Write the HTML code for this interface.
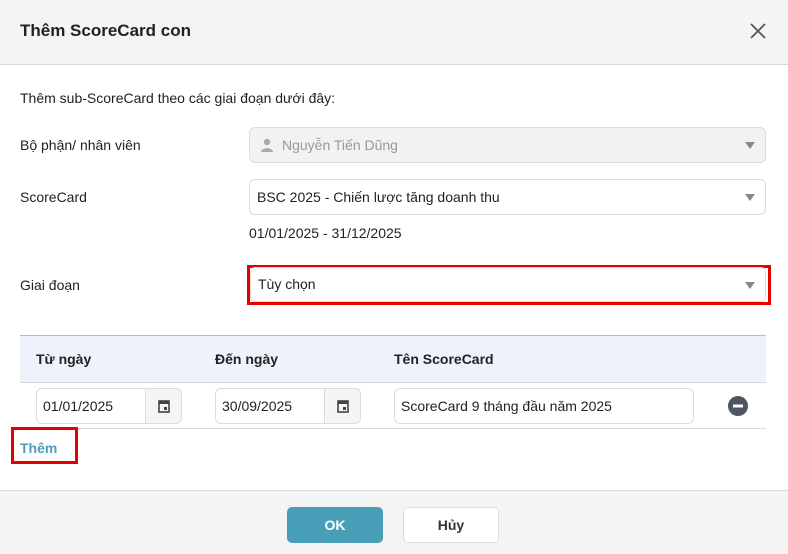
<!DOCTYPE html>
<html><head><meta charset="utf-8"><style>
*{box-sizing:border-box;margin:0;padding:0}
body{width:788px;height:554px;overflow:hidden;background:#fff;font-family:"Liberation Sans",Arial,sans-serif;font-size:14px;color:#222;position:relative}
.a{position:absolute}
.hdr{left:0;top:0;width:788px;height:65px;background:#f4f4f4;border-bottom:1px solid #d8d8d8}
.sel{border:1px solid #dcdcdc;border-radius:6px;background:#fff;height:36px;line-height:34px;padding-left:7px;font-size:14px}
.tri{position:absolute;right:10px;top:14px;width:0;height:0;border-left:5px solid transparent;border-right:5px solid transparent;border-top:7px solid #888}
.inp{border:1px solid #dcdcdc;border-radius:6px;background:#fff;height:36px;line-height:34px;padding-left:6px;font-size:14px}
.cal{position:absolute;right:0;top:0;width:36px;height:34px;border-left:1px solid #dcdcdc;background:#f5f5f5;border-radius:0 6px 6px 0}
.btn{border-radius:5px;height:36px;line-height:36px;text-align:center;font-weight:bold;font-size:14px}
</style></head><body>
<div class="a hdr"></div>
<div class="a" style="left:20px;top:21px;font-size:17px;font-weight:bold;color:#222">Thêm ScoreCard con</div>
<svg class="a" style="left:750px;top:23px" width="16" height="16" viewBox="0 0 16 16"><path d="M1 1L15 15M15 1L1 15" stroke="#555" stroke-width="1.8"/></svg>
<div class="a" style="left:20px;top:90px">Thêm sub-ScoreCard theo các giai đoạn dưới đây:</div>
<div class="a" style="left:20px;top:137px">Bộ phận/ nhân viên</div>
<div class="a sel" style="left:249px;top:127px;width:517px;background:#f2f2f2;color:#999;padding-left:32px">Nguyễn Tiến Dũng<span class="tri"></span>
<svg class="a" style="left:10px;top:10px" width="14" height="14" viewBox="0 0 14 14"><circle cx="7" cy="4" r="3.2" fill="#aaa"/><path d="M1 14C1 9 13 9 13 14Z" fill="#aaa"/></svg></div>
<div class="a" style="left:20px;top:189px">ScoreCard</div>
<div class="a sel" style="left:249px;top:179px;width:517px">BSC 2025 - Chiến lược tăng doanh thu<span class="tri"></span></div>
<div class="a" style="left:249px;top:225px">01/01/2025 - 31/12/2025</div>
<div class="a" style="left:20px;top:277px">Giai đoạn</div>
<div class="a" style="left:247px;top:265px;width:524px;height:40px;border:3px solid #e60000"></div>
<div class="a sel" style="left:250px;top:267px;width:516px;height:35px;line-height:33px;border-radius:5px">Tùy chọn<span class="tri"></span></div>
<div class="a" style="left:20px;top:335px;width:746px;height:48px;background:#eef3fb;border-top:1px solid #bbb;border-bottom:1px solid #d8d8d8"></div>
<div class="a" style="left:36px;top:351px;font-weight:bold">Từ ngày</div>
<div class="a" style="left:215px;top:351px;font-weight:bold">Đến ngày</div>
<div class="a" style="left:394px;top:351px;font-weight:bold">Tên ScoreCard</div>
<div class="a" style="left:20px;top:428px;width:746px;height:1px;background:#d8d8d8"></div>
<div class="a inp" style="left:36px;top:388px;width:146px">01/01/2025<div class="cal"><svg class="a" style="left:12px;top:10px" width="12" height="14" viewBox="0 0 12 14"><rect x="1" y="2" width="10" height="11" fill="none" stroke="#444" stroke-width="1.6"/><rect x="1" y="2" width="10" height="3" fill="#444"/><rect x="6" y="8" width="3" height="3" fill="#444"/></svg></div></div>
<div class="a inp" style="left:215px;top:388px;width:146px">30/09/2025<div class="cal"><svg class="a" style="left:12px;top:10px" width="12" height="14" viewBox="0 0 12 14"><rect x="1" y="2" width="10" height="11" fill="none" stroke="#444" stroke-width="1.6"/><rect x="1" y="2" width="10" height="3" fill="#444"/><rect x="6" y="8" width="3" height="3" fill="#444"/></svg></div></div>
<div class="a inp" style="left:394px;top:388px;width:300px">ScoreCard 9 tháng đầu năm 2025</div>
<svg class="a" style="left:728px;top:396px" width="20" height="20" viewBox="0 0 20 20"><circle cx="10" cy="10" r="10" fill="#4f5562"/><rect x="5" y="8.5" width="10" height="3" fill="#fff"/></svg>
<div class="a" style="left:11px;top:427px;width:67px;height:37px;border:3px solid #e60000"></div>
<div class="a" style="left:20px;top:440px;font-weight:bold;color:#4a9fb8">Thêm</div>
<div class="a" style="left:0;top:490px;width:788px;height:64px;background:#f4f4f4;border-top:1px solid #d8d8d8"></div>
<div class="a btn" style="left:287px;top:507px;width:96px;background:#4a9fb8;color:#fff">OK</div>
<div class="a btn" style="left:403px;top:507px;width:96px;background:#fff;border:1px solid #ddd;line-height:34px;color:#333">Hủy</div>
</body></html>
